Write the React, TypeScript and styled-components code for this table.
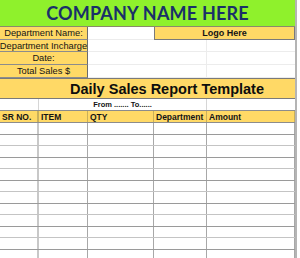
import styled, { createGlobalStyle } from "styled-components";

const GlobalStyle = createGlobalStyle`
    body {
        margin: 0;
        background: #ffffff;
        font-family: "Liberation Sans", Arial, sans-serif;
        color: #141414;
    }
`;

const Page = styled.div`
    width: 300px;
    height: 258px;
    overflow: hidden;
    background: #ffffff;
`;

const Sheet = styled.div`
    width: 295px;
    border-right: 2px solid #b4b4b4;
    box-sizing: content-box;
`;

const CompanyBar = styled.div`
    height: 27px;
    background: #8ff12c;
    border-bottom: 1px solid #8a8a6a;
    box-sizing: border-box;
    display: flex;
    align-items: center;
    justify-content: center;
    font-family: Lato, "Open Sans", sans-serif;
    font-weight: 700;
    font-size: 18px;
    color: #1a3069;
    letter-spacing: 0.2px;
`;

const InfoGrid = styled.div`
    display: grid;
    grid-template-columns: 88px 66px 141px;
    grid-template-rows: 13px 12px 13px 13px;
`;

const Label = styled.div`
    grid-column: 1;
    background: #ffd966;
    border-right: 1px solid #6b6b6b;
    border-bottom: 1px solid #8c8c8c;
    box-sizing: border-box;
    display: flex;
    align-items: center;
    justify-content: center;
    font-size: 9.3px;
    white-space: nowrap;
    overflow: hidden;
`;

const Blank = styled.div<{ $edge?: boolean }>`
    background: #ffffff;
    border-bottom: 1px solid #ececec;
    border-right: ${(p) => (p.$edge ? "1px solid #ececec" : "none")};
    box-sizing: border-box;
`;

const LogoCell = styled.div`
    grid-column: 3;
    grid-row: 1;
    background: #ffd966;
    border: 1px solid #7a7a7a;
    border-top: none;
    box-sizing: border-box;
    display: flex;
    align-items: center;
    justify-content: center;
    font-size: 9px;
    font-weight: 700;
`;

const LogoSpace = styled.div`
    grid-column: 3;
    grid-row: 2 / span 3;
    display: grid;
    grid-template-columns: 53px 88px;
    grid-template-rows: 12px 13px 13px;
`;

const TitleBand = styled.div`
    display: grid;
    grid-template-columns: 39px 1fr;
    height: 21px;
    background: #ffd966;
    border-top: 1px solid #7a7a7a;
    border-bottom: 1px solid #7a7a7a;
    box-sizing: border-box;
`;

const TitleText = styled.div`
    grid-column: 2;
    display: flex;
    align-items: center;
    justify-content: center;
    font-weight: 700;
    font-size: 14.5px;
    color: #0d0d0d;
    white-space: nowrap;
`;

const FromRow = styled.div`
    display: grid;
    grid-template-columns: 39px 168px 88px;
    height: 12px;
    border-bottom: 1px solid #8c8c8c;
    box-sizing: border-box;
`;

const FromCell = styled.div<{ $line?: boolean }>`
    border-right: ${(p) => (p.$line ? "1px solid #d6d6d6" : "none")};
    display: flex;
    align-items: center;
    justify-content: center;
    font-size: 7.5px;
    font-weight: 700;
    white-space: nowrap;
`;

const cols = "39px 49px 66px 53px 88px";

const HeaderRow = styled.div`
    display: grid;
    grid-template-columns: ${cols};
    height: 12px;
    background: #ffd966;
    border-bottom: 1px solid #8c8c8c;
    box-sizing: border-box;
`;

const HeadCell = styled.div<{ $thick?: boolean }>`
    border-right: ${(p) => (p.$thick ? "2px solid #c9b05a" : "1px solid #c9b05a")};
    display: flex;
    align-items: center;
    padding-left: 2px;
    font-size: 8.5px;
    font-weight: 700;
    white-space: nowrap;
    overflow: hidden;
`;

const DataRow = styled.div<{ $h: number; $dark: boolean }>`
    display: grid;
    grid-template-columns: ${cols};
    height: ${(p) => p.$h}px;
    border-bottom: 1px solid ${(p) => (p.$dark ? "#9a9a9a" : "#c4c4c4")};
    box-sizing: border-box;
`;

const DataCell = styled.div<{ $thick?: boolean }>`
    border-right: ${(p) => (p.$thick ? "2px solid #c8c8c8" : "1px solid #a8a8a8")};
`;

const labels = ["Department Name:", "Department Incharge", "Date:", "Total Sales $"];
const headers = ["SR NO.", "ITEM", "QTY", "Department", "Amount"];

export default function App() {
    const rows = Array.from({ length: 12 }, (_, i) => i);
    return (
        <Page>
            <GlobalStyle />
            <Sheet>
                <CompanyBar>COMPANY NAME HERE</CompanyBar>
                <InfoGrid>
                    {labels.map((l, i) => (
                        <Label key={l} style={{ gridRow: i + 1 }}>{l}</Label>
                    ))}
                    {labels.map((l, i) => (
                        <Blank key={l + "b"} style={{ gridColumn: 2, gridRow: i + 1 }} />
                    ))}
                    <LogoCell>Logo Here</LogoCell>
                    <LogoSpace>
                        {[0, 1, 2].map((r) => [
                            <Blank key={r + "a"} $edge />,
                            <Blank key={r + "c"} />,
                        ])}
                    </LogoSpace>
                </InfoGrid>
                <TitleBand>
                    <TitleText>Daily Sales Report Template</TitleText>
                </TitleBand>
                <FromRow>
                    <FromCell $line />
                    <FromCell $line>From ....... To......</FromCell>
                    <FromCell />
                </FromRow>
                <HeaderRow>
                    {headers.map((h, i) => (
                        <HeadCell key={h} $thick={i === 0}>{h}</HeadCell>
                    ))}
                </HeaderRow>
                {rows.map((r) => (
                    <DataRow key={r} $h={r % 2 === 0 ? 12 : 11} $dark={r % 2 === 0}>
                        {headers.map((h, i) => (
                            <DataCell key={h} $thick={i === 0} />
                        ))}
                    </DataRow>
                ))}
            </Sheet>
        </Page>
    );
}
